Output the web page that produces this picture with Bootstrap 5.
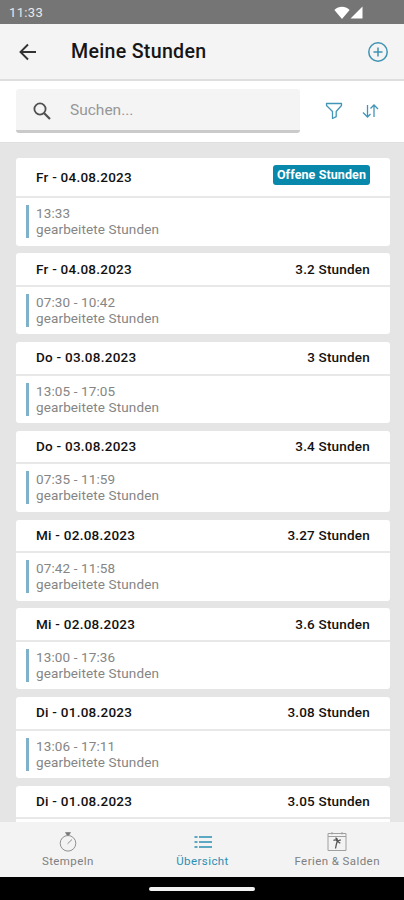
<!DOCTYPE html>
<html lang="de">
<head>
<meta charset="utf-8">
<meta name="viewport" content="width=device-width, initial-scale=1">
<title>Meine Stunden</title>
<link href="https://cdn.jsdelivr.net/npm/bootstrap@5.3.0/dist/css/bootstrap.min.css" rel="stylesheet">
<style>
:root { --accent: #2b8fb3; }
body { font-family: Roboto, "Liberation Sans", sans-serif; background: #e5e5e5; }
svg { display: block; flex: none; }
.screen { height: 900px; }
.status-bar { height: 24px; background: #757575; color: #e8e8e8; font-size: 13px; padding: 2px 40px 0 9px; letter-spacing: .35px; }
.app-bar { height: 57px; background: #f4f4f4; border-bottom: 2px solid #dedede; padding: 0 15px 0 17px; }
.app-title { font-size: 19.6px; font-weight: 500; letter-spacing: .3px; color: #161616; margin-left: 32px; line-height: 24px; }
.search-row { height: 62px; border-bottom: 1px solid #e0e0e0; padding: 8px 24px 0 16px; }
.search-field { width: 284px; height: 44px; background: #f4f4f4; border-radius: 3px; border-bottom: 3px solid #cacaca; padding: 2px 0 0 16px; font-size: 15.5px; color: #979797; letter-spacing: 0; }
.search-hint { margin-left: 18px; }
.entries { padding: 14.6px 14px 0 16px; gap: 7.75px; min-height: 0; }
.entry { background: #fff; border-radius: 3px; height: 81px; flex: none; }
.entry-head { height: 33.5px; border-bottom: 2px solid #e8e8e8; padding: 0 20px 1px; font-size: 13.5px; line-height: 16px; font-weight: 500; letter-spacing: .25px; color: #111; }
.entry-head span:last-child { letter-spacing: .2px; }
.entry-open { height: 88px; }
.entry-open .entry-head { height: 40.4px; padding-bottom: 0; }
.open-tag { background: #0888aa; border-radius: 3px; color: #fff; height: 20px; line-height: 20px; width: 97px; text-align: center; font-size: 12.5px; font-weight: 700; margin-bottom: 3px; }
.entry-head .open-tag:last-child { letter-spacing: .1px; }
.entry-note { margin: 7px 0 0 10px; height: 33px; border-left: 3px solid #7fb2ca; padding-left: 7px; font-size: 13.5px; line-height: 16px; color: #858585; letter-spacing: .12px; }
.tab-bar { height: 55px; background: #f3f3f3; flex: none; font-size: 11.5px; letter-spacing: .42px; color: #808080; }
.tab-item { width: 135px; padding: 9px 0 0 1px; line-height: 14px; }
.tab-item svg { margin-bottom: 2px; }
.tab-active { color: var(--accent); }
.home-bar { height: 23px; background: #000; flex: none; }
.home-pill { width: 106px; height: 4px; border-radius: 2px; background: #f2f2f2; }
</style>
</head>
<body>
<div class="screen d-flex flex-column overflow-hidden">
  <div class="status-bar d-flex align-items-center justify-content-between flex-shrink-0">
    <span>11:33</span>
    <svg width="30" height="14" viewBox="0 0 30 14" fill="#fff"><path d="M.4 4C4.800-.2 11.200-.2 15.600 4L8 13zM28.500.5V12.500H16.500z"/></svg>
  </div>
  <header class="app-bar d-flex align-items-center flex-shrink-0">
    <svg width="22" height="22" viewBox="0 0 22 22" fill="none" stroke="#333" stroke-width="1.900"><path d="M19 11H4M11 3.500 3.500 11 11 18.500"/></svg>
    <h1 class="app-title mb-0">Meine Stunden</h1>
    <svg class="ms-auto" width="22" height="22" viewBox="0 0 22 22" fill="none" stroke="#3f93b3" stroke-width="1.500"><circle cx="11" cy="11" r="9.200"/><path d="M11 6.500v9M6.500 11h9"/></svg>
  </header>
  <div class="search-row bg-white d-flex align-items-start flex-shrink-0">
    <div class="search-field d-flex align-items-center">
      <svg width="20" height="20" viewBox="0 0 20 20" fill="none" stroke="#505050" stroke-width="1.800"><circle cx="8" cy="8" r="5.600"/><path d="m12 12 6 6" stroke-width="2.200"/></svg>
      <span class="search-hint">Suchen...</span>
    </div>
    <div class="d-flex ms-auto pt-2 mt-1">
      <svg width="20" height="20" viewBox="0 0 20 20" fill="none" stroke="#4196b7" stroke-width="1.300" stroke-linejoin="round"><path d="M2.500 2.500h15v2l-5.300 6v5.200L8.500 17.500v-7L2.500 4.500z"/></svg>
      <svg class="ms-3" width="20" height="20" viewBox="0 0 20 20" fill="none" stroke="#4196b7" stroke-width="1.300"><path d="M7.500 4v12M3 11.500l4.500 4.500 3-3M14 16V4M10.500 7.500 14 4l4 4"/></svg>
    </div>
  </div>
  <main class="entries d-flex flex-column flex-grow-1 overflow-hidden">
    <article class="entry entry-open">
      <div class="entry-head d-flex align-items-center justify-content-between"><span>Fr - 04.08.2023</span><span class="open-tag">Offene Stunden</span></div>
      <div class="entry-note">13:33<br>gearbeitete Stunden</div>
    </article>
    <article class="entry">
      <div class="entry-head d-flex align-items-center justify-content-between"><span>Fr - 04.08.2023</span><span>3.2 Stunden</span></div>
      <div class="entry-note">07:30 - 10:42<br>gearbeitete Stunden</div>
    </article>
    <article class="entry">
      <div class="entry-head d-flex align-items-center justify-content-between"><span>Do - 03.08.2023</span><span>3 Stunden</span></div>
      <div class="entry-note">13:05 - 17:05<br>gearbeitete Stunden</div>
    </article>
    <article class="entry">
      <div class="entry-head d-flex align-items-center justify-content-between"><span>Do - 03.08.2023</span><span>3.4 Stunden</span></div>
      <div class="entry-note">07:35 - 11:59<br>gearbeitete Stunden</div>
    </article>
    <article class="entry">
      <div class="entry-head d-flex align-items-center justify-content-between"><span>Mi - 02.08.2023</span><span>3.27 Stunden</span></div>
      <div class="entry-note">07:42 - 11:58<br>gearbeitete Stunden</div>
    </article>
    <article class="entry">
      <div class="entry-head d-flex align-items-center justify-content-between"><span>Mi - 02.08.2023</span><span>3.6 Stunden</span></div>
      <div class="entry-note">13:00 - 17:36<br>gearbeitete Stunden</div>
    </article>
    <article class="entry">
      <div class="entry-head d-flex align-items-center justify-content-between"><span>Di - 01.08.2023</span><span>3.08 Stunden</span></div>
      <div class="entry-note">13:06 - 17:11<br>gearbeitete Stunden</div>
    </article>
    <article class="entry">
      <div class="entry-head d-flex align-items-center justify-content-between"><span>Di - 01.08.2023</span><span>3.05 Stunden</span></div>
    </article>
  </main>
  <nav class="tab-bar d-flex">
    <div class="tab-item d-flex flex-column align-items-center">
      <svg width="20" height="21" viewBox="0 0 20 21" fill="none" stroke="#909090"><circle cx="10" cy="12.300" r="7.800"/><path d="m9.500 12.800 4.500-4.300"/><path d="M7.500 1.500h5L11 4H9z" fill="#777" stroke="#777" stroke-width=".6"/></svg>
      <span>Stempeln</span>
    </div>
    <div class="tab-item tab-active d-flex flex-column align-items-center">
      <svg width="20" height="21" viewBox="0 0 20 21" fill="none" stroke="#2b8fb3" stroke-width="1.700"><path d="M1.500 6h3M1.500 11h3M1.500 16h3M6 6h13M6 11h13M6 16h13"/></svg>
      <span>Übersicht</span>
    </div>
    <div class="tab-item d-flex flex-column align-items-center">
      <svg width="20" height="21" viewBox="0 0 20 21" fill="none" stroke="#a0a0a0"><path d="M1 2.500h18v17H1zM1 5.500h18M5 1v2.500M15 1v2.500"/><path d="M8.500 17.500c.5-3 1-5 1.800-7.500M6.500 9.500c1.300-1 2.500-.8 3.800.5M8.500 7c1.500.3 2 1.500 1.800 3M10.300 10l3.500-1.200M10.300 10.200l3 2" stroke="#555" stroke-width="1.300"/></svg>
      <span>Ferien &amp; Salden</span>
    </div>
  </nav>
  <div class="home-bar d-flex align-items-center justify-content-center"><div class="home-pill"></div></div>
</div>
<script src="https://cdn.jsdelivr.net/npm/bootstrap@5.3.0/dist/js/bootstrap.bundle.min.js"></script>
</body>
</html>
